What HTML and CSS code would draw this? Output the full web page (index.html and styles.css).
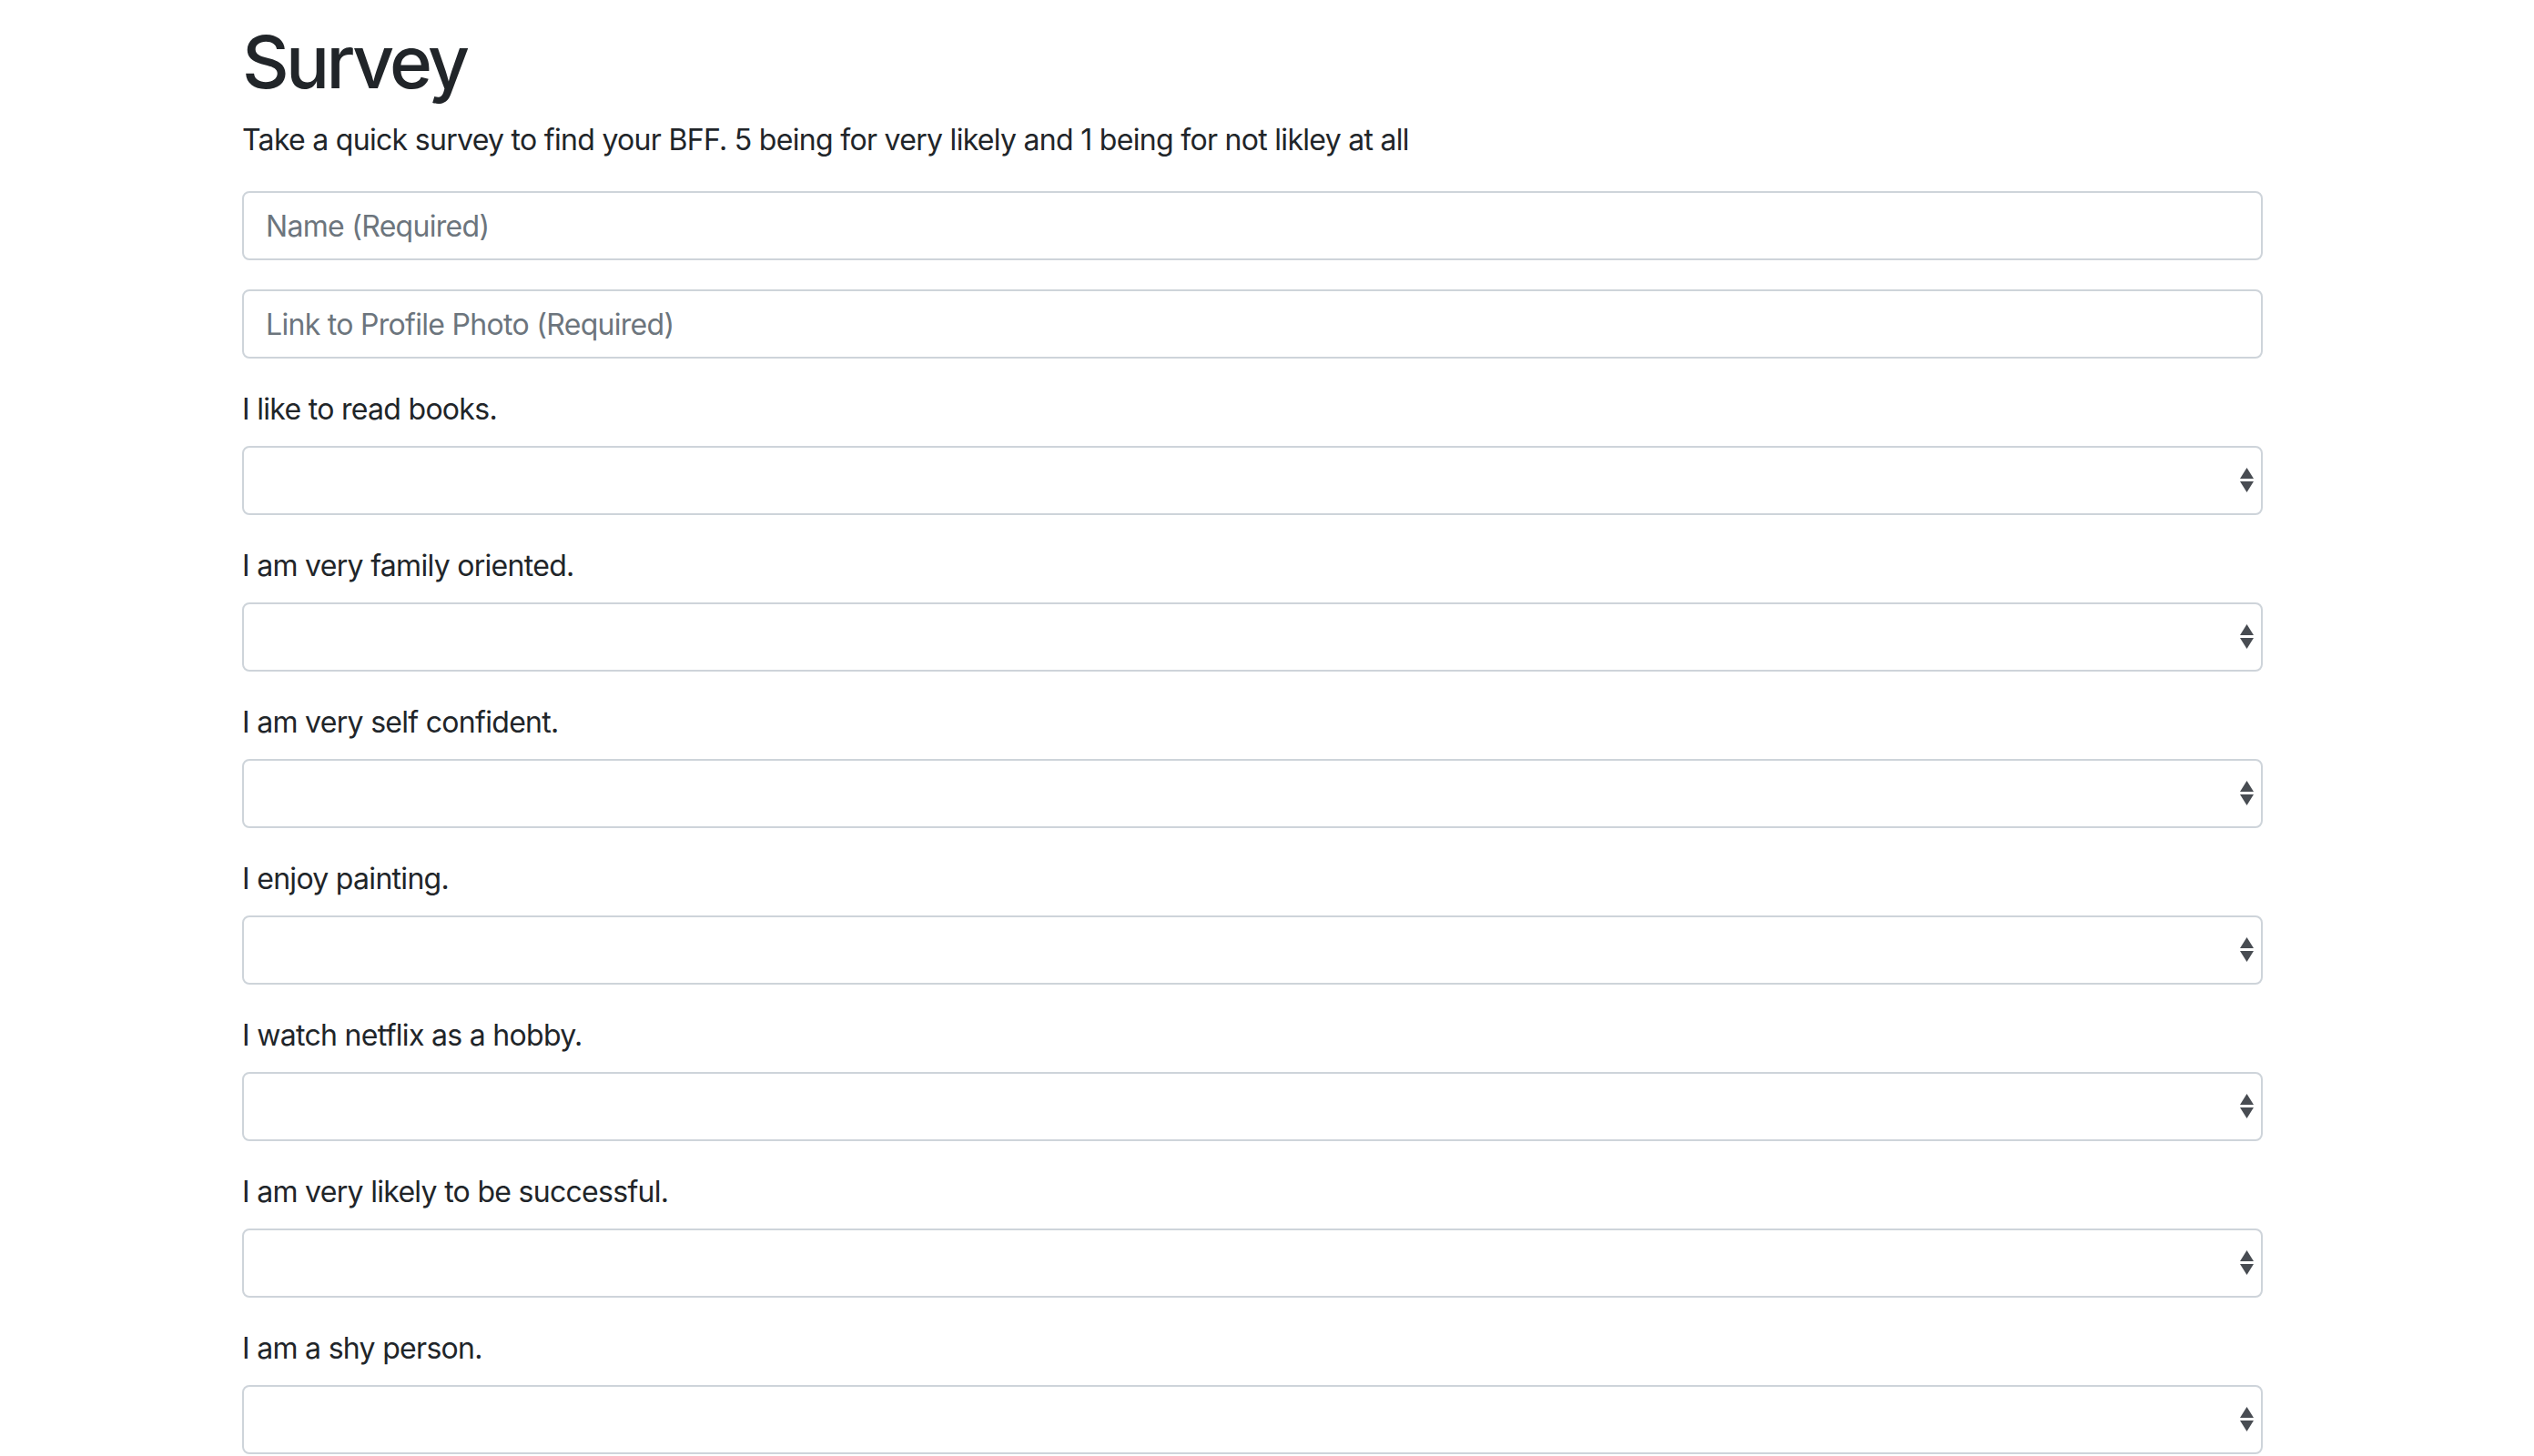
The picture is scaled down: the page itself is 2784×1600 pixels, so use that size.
FILE: index.html
```html
<!DOCTYPE html>
<html lang="en">
<head>
<meta charset="utf-8">
<title>Survey</title>
<link rel="stylesheet" href="styles.css">
</head>
<body>
<div class="page">
  <div class="container">
    <h1 class="title">Survey</h1>
    <p class="intro">Take a quick survey to find your BFF. 5 being for very likely and 1 being for not likley at all</p>
    <form class="survey">
      <div class="field">
        <input class="control" type="text" placeholder="Name (Required)">
      </div>
      <div class="field">
        <input class="control" type="text" placeholder="Link to Profile Photo (Required)">
      </div>

      <div class="field">
        <label class="label">I like to read books.</label>
        <div class="select-wrap">
          <select class="control select"><option></option><option>1</option><option>2</option><option>3</option><option>4</option><option>5</option></select>
          <svg class="arrows" width="15" height="27" viewBox="0 0 15 27"><polygon points="7.5,0 15,12 0,12"/><polygon points="0,15 15,15 7.5,27"/></svg>
        </div>
      </div>

      <div class="field">
        <label class="label">I am very family oriented.</label>
        <div class="select-wrap">
          <select class="control select"><option></option><option>1</option><option>2</option><option>3</option><option>4</option><option>5</option></select>
          <svg class="arrows" width="15" height="27" viewBox="0 0 15 27"><polygon points="7.5,0 15,12 0,12"/><polygon points="0,15 15,15 7.5,27"/></svg>
        </div>
      </div>

      <div class="field">
        <label class="label">I am very self confident.</label>
        <div class="select-wrap">
          <select class="control select"><option></option><option>1</option><option>2</option><option>3</option><option>4</option><option>5</option></select>
          <svg class="arrows" width="15" height="27" viewBox="0 0 15 27"><polygon points="7.5,0 15,12 0,12"/><polygon points="0,15 15,15 7.5,27"/></svg>
        </div>
      </div>

      <div class="field">
        <label class="label">I enjoy painting.</label>
        <div class="select-wrap">
          <select class="control select"><option></option><option>1</option><option>2</option><option>3</option><option>4</option><option>5</option></select>
          <svg class="arrows" width="15" height="27" viewBox="0 0 15 27"><polygon points="7.5,0 15,12 0,12"/><polygon points="0,15 15,15 7.5,27"/></svg>
        </div>
      </div>

      <div class="field">
        <label class="label">I watch netflix as a hobby.</label>
        <div class="select-wrap">
          <select class="control select"><option></option><option>1</option><option>2</option><option>3</option><option>4</option><option>5</option></select>
          <svg class="arrows" width="15" height="27" viewBox="0 0 15 27"><polygon points="7.5,0 15,12 0,12"/><polygon points="0,15 15,15 7.5,27"/></svg>
        </div>
      </div>

      <div class="field">
        <label class="label">I am very likely to be successful.</label>
        <div class="select-wrap">
          <select class="control select"><option></option><option>1</option><option>2</option><option>3</option><option>4</option><option>5</option></select>
          <svg class="arrows" width="15" height="27" viewBox="0 0 15 27"><polygon points="7.5,0 15,12 0,12"/><polygon points="0,15 15,15 7.5,27"/></svg>
        </div>
      </div>

      <div class="field">
        <label class="label">I am a shy person.</label>
        <div class="select-wrap">
          <select class="control select"><option></option><option>1</option><option>2</option><option>3</option><option>4</option><option>5</option></select>
          <svg class="arrows" width="15" height="27" viewBox="0 0 15 27"><polygon points="7.5,0 15,12 0,12"/><polygon points="0,15 15,15 7.5,27"/></svg>
        </div>
      </div>
    </form>
  </div>
</div>
</body>
</html>
```

FILE: styles.css
```css
* {
  box-sizing: border-box;
}

html, body {
  margin: 0;
  padding: 0;
  background: #ffffff;
}

body {
  font-family: Inter, "Liberation Sans", sans-serif;
  font-size: 32px;
  line-height: 48px;
  letter-spacing: -0.7px;
  color: #212529;
}

.page {
  padding-right: 32px;
}

.container {
  width: 2220px;
  margin: 0 auto;
  padding-top: 20px;
}

.title {
  margin: 0 0 14px;
  font-size: 80px;
  line-height: 96px;
  font-weight: 500;
  letter-spacing: -3.6px;
  color: #212529;
}

.intro {
  margin: 0 0 32px;
}

.survey {
  display: flex;
  flex-direction: column;
}

.field {
  display: flex;
  flex-direction: column;
  margin-bottom: 32px;
}

.label {
  display: block;
  margin-bottom: 16px;
  line-height: 48px;
}

.control {
  display: block;
  width: 100%;
  height: 76px;
  padding: 12px 24px;
  font-family: inherit;
  font-size: 32px;
  line-height: 48px;
  letter-spacing: -0.7px;
  color: #495057;
  background: #ffffff;
  border: 2px solid #ced4da;
  border-radius: 8px;
  outline: none;
}

.control::placeholder {
  color: #6c757d;
  opacity: 1;
}

.select-wrap {
  position: relative;
}

.select {
  appearance: none;
  -webkit-appearance: none;
}

.arrows {
  position: absolute;
  right: 10px;
  top: 24px;
  fill: #484c52;
  pointer-events: none;
}
```
